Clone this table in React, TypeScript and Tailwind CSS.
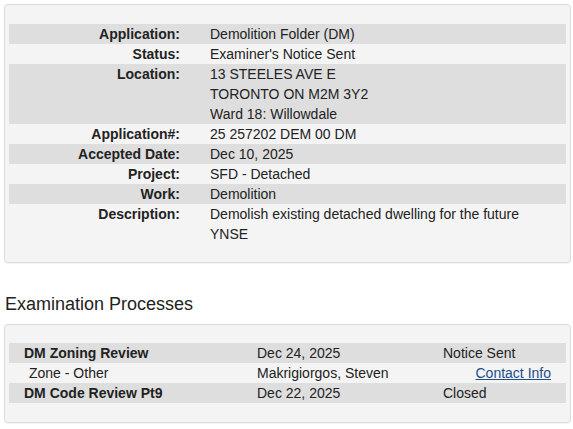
const details: { label: string; lines: string[] }[] = [
  { label: "Application:", lines: ["Demolition Folder (DM)"] },
  { label: "Status:", lines: ["Examiner's Notice Sent"] },
  { label: "Location:", lines: ["13 STEELES AVE E", "TORONTO ON M2M 3Y2", "Ward 18: Willowdale"] },
  { label: "Application#:", lines: ["25 257202 DEM 00 DM"] },
  { label: "Accepted Date:", lines: ["Dec 10, 2025"] },
  { label: "Project:", lines: ["SFD - Detached"] },
  { label: "Work:", lines: ["Demolition"] },
  { label: "Description:", lines: ["Demolish existing detached dwelling for the future YNSE"] },
];

export default function App() {
  return (
    <div className="min-h-screen bg-white pt-[4px] font-['Liberation_Sans',Arial,sans-serif] text-[14px] leading-[20px] text-[#222]">
      <section className="ml-[4px] w-[567px] rounded-[4px] border border-[#dcdcdc] bg-[#f4f4f4] px-[4px] pb-[18px] pt-[19px] shadow-[0_1px_1px_rgba(0,0,0,0.05)]">
        {details.map((row, i) => (
          <div key={row.label} className={`flex ${i % 2 === 0 ? "bg-[#dedede]" : ""}`}>
            <div className="w-[176px] shrink-0 pr-[5px] text-right font-bold">{row.label}</div>
            <div className="w-[345px] pl-[25px]">
              {row.lines.map((l) => (
                <div key={l}>{l}</div>
              ))}
            </div>
          </div>
        ))}
      </section>

      <h2 className="ml-[5px] mt-[31px] text-[18px] leading-[20px]">Examination Processes</h2>

      <section className="ml-[4px] mt-[10px] w-[567px] rounded-[4px] border border-[#dcdcdc] bg-[#f4f4f4] px-[4px] pb-[19px] pt-[18px] shadow-[0_1px_1px_rgba(0,0,0,0.05)]">
        <div className="flex bg-[#dedede]">
          <div className="w-[248px] pl-[15px] font-bold">DM Zoning Review</div>
          <div className="w-[186px]">Dec 24, 2025</div>
          <div className="flex-1">Notice Sent</div>
        </div>
        <div className="flex">
          <div className="w-[248px] pl-[20px]">Zone - Other</div>
          <div className="w-[186px]">Makrigiorgos, Steven</div>
          <div className="flex-1 pr-[15px] text-right">
            <a href="#" className="text-[#1f4e8c] underline">Contact Info</a>
          </div>
        </div>
        <div className="flex bg-[#dedede]">
          <div className="w-[248px] pl-[15px] font-bold">DM Code Review Pt9</div>
          <div className="w-[186px]">Dec 22, 2025</div>
          <div className="flex-1">Closed</div>
        </div>
      </section>
    </div>
  );
}
